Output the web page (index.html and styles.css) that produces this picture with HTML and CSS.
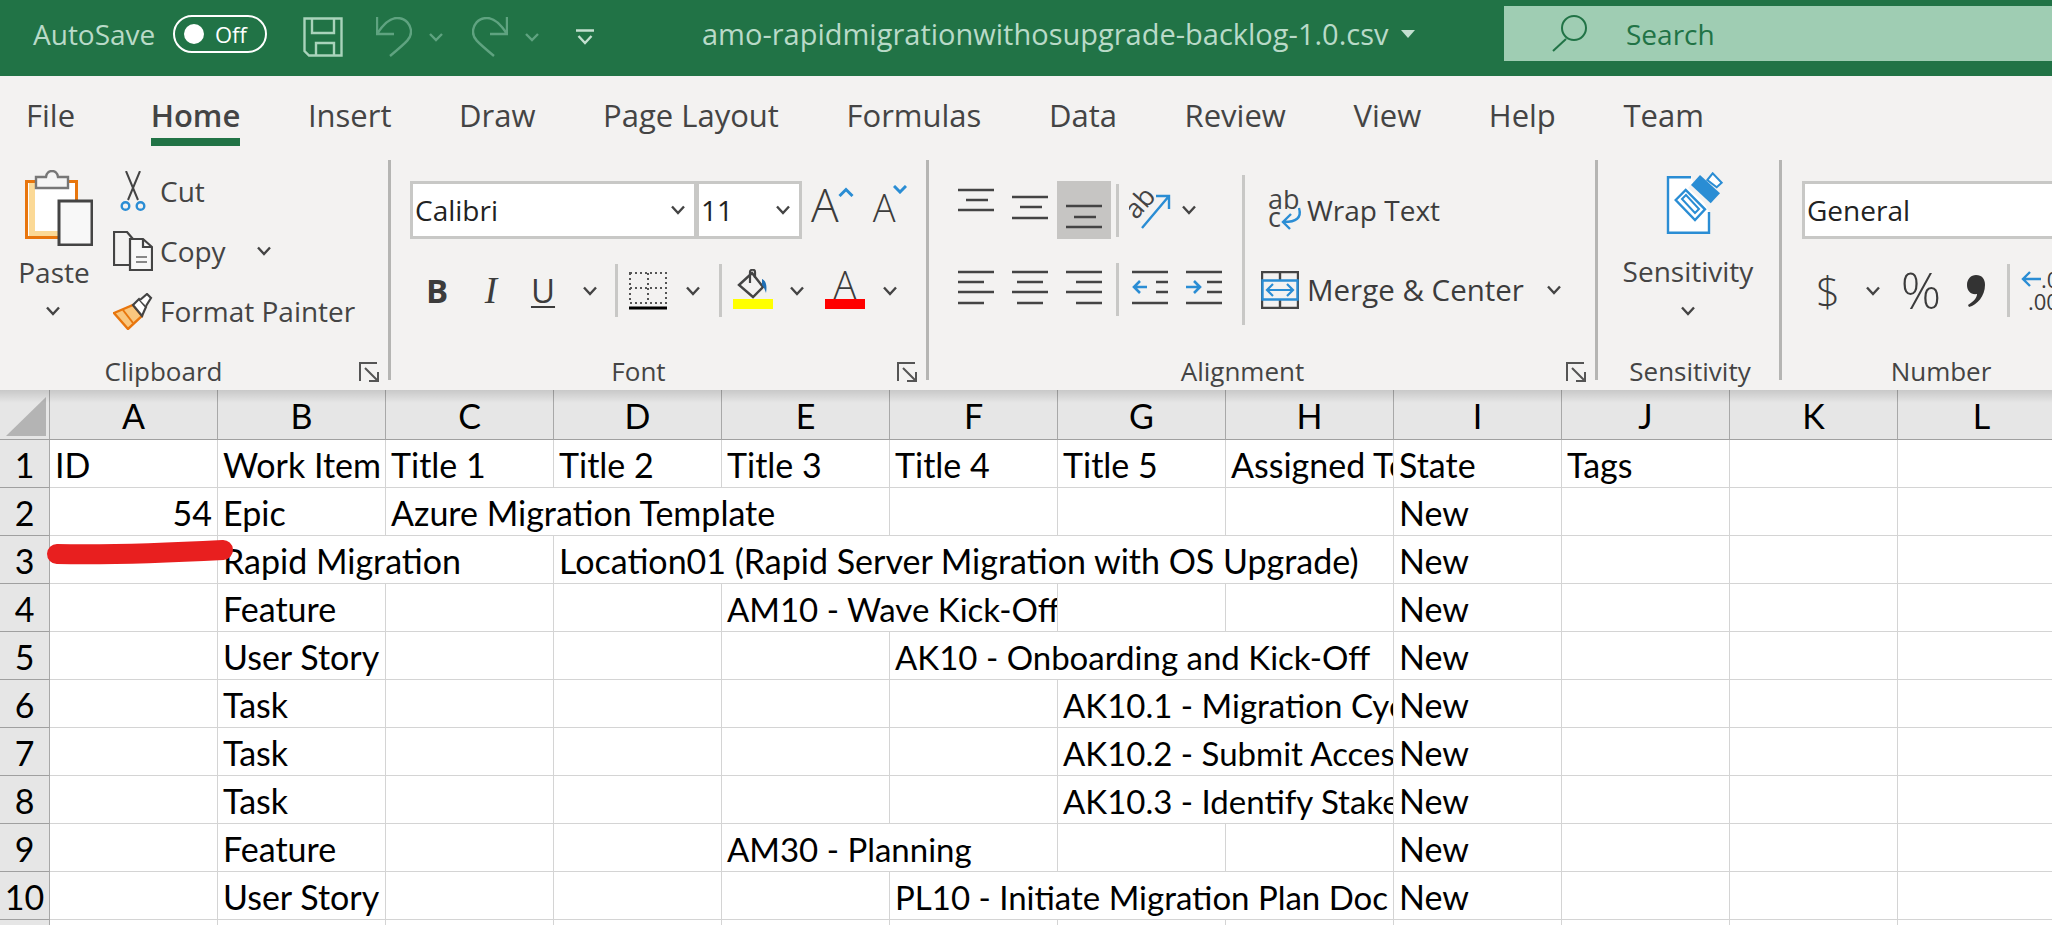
FILE: index.html
```html
<!DOCTYPE html>
<html>
<head>
<meta charset="utf-8">
<title>amo-rapidmigrationwithosupgrade-backlog-1.0.csv - Excel</title>
<link rel="stylesheet" href="styles.css">
</head>
<body>

<svg class="defs" aria-hidden="true">
  <symbol id="chev" viewBox="0 0 14 10"><path d="M1 1.5l6 6.5 6-6.5" fill="none" stroke="#444" stroke-width="2.4"/></symbol>
  <symbol id="launch" viewBox="0 0 21 20"><path d="M1 19V1h17M6 6l13 13M19 10v9h-9" fill="none" stroke="#555" stroke-width="2"/></symbol>
</svg>

<header class="titlebar">
  <span class="autosave">AutoSave</span>
  <span class="toggle"><i class="knob"></i>Off</span>
  <svg class="qa qa-save" width="40" height="40" viewBox="0 0 40 40" fill="none" stroke="#a9d3bb" stroke-width="2.4"><path d="M1.5 1.5h37v37H6l-4.500-4.500zM9 1.500V16h22V1.500M13 38.500V26h18v12.500"/></svg>
  <svg class="qa qa-undo" width="36" height="40" viewBox="0 0 36 40" fill="none" stroke="#5fa380" stroke-width="2.400"><path d="M1 0v17h17M1 17C8 6 14 1 21 1c9 0 14 7 14 14 0 6-3 9-21 24"/></svg>
  <svg class="qa qa-chev" width="14" height="9" viewBox="0 0 14 9" fill="none" stroke="#5fa380" stroke-width="2.400"><path d="M1 1l6 6 6-6"/></svg>
  <svg class="qa qa-redo" width="36" height="40" viewBox="0 0 36 40" fill="none" stroke="#5fa380" stroke-width="2.400"><path d="M35 0v17H18M35 17C28 6 22 1 15 1 6 1 1 8 1 15c0 6 3 9 21 24"/></svg>
  <svg class="qa qa-chev" width="14" height="9" viewBox="0 0 14 9" fill="none" stroke="#5fa380" stroke-width="2.400"><path d="M1 1l6 6 6-6"/></svg>
  <svg class="qa qa-more" width="18" height="16" viewBox="0 0 18 16" fill="none" stroke="#c3e0d0" stroke-width="2.400"><path d="M0 1.500h18M2.500 7l6.500 7 6.500-7"/></svg>
  <span class="filename">amo-rapidmigrationwithosupgrade-backlog-1.0.csv</span>
  <svg class="caret" width="14" height="8" viewBox="0 0 14 8"><path d="M0 0h14l-7 8z" fill="#c3e0d0"/></svg>
  <div class="search">
    <svg width="36" height="37" viewBox="0 0 36 37" fill="none" stroke="#217346" stroke-width="2"><circle cx="22" cy="13" r="12"/><path d="M14 24L1 36"/></svg>
    <span>Search</span>
  </div>
</header>

<nav class="tabs">
  <span>File</span>
  <span class="on">Home</span>
  <span>Insert</span>
  <span>Draw</span>
  <span>Page Layout</span>
  <span>Formulas</span>
  <span>Data</span>
  <span>Review</span>
  <span>View</span>
  <span>Help</span>
  <span>Team</span>
</nav>

<section class="ribbon">

  <div class="group g-clip">
    <div class="body clip-body">
      <div class="paste">
        <svg class="paste-ic" width="68" height="76" viewBox="0 0 68 76">
          <rect x="1.500" y="11.500" width="50" height="56" fill="#fff" stroke="#e8760d" stroke-width="3"/>
          <path d="M4 13h6v48h24v5H4z" fill="#fbd996"/>
          <path d="M11 18V7h10c1-8 11-8 12 0h10v11z" fill="#f5f5f5" stroke="#777" stroke-width="2.400"/>
          <rect x="34" y="31" width="33" height="44" fill="#f8f8f8" stroke="#444" stroke-width="3"/>
        </svg>
        <span class="paste-label">Paste</span>
        <svg class="chev"><use href="#chev"/></svg>
      </div>
      <div class="clip-list">
        <div class="clip-row">
          <span class="clip-ic"><svg width="26" height="40" viewBox="0 0 26 40" fill="none"><path d="M6 0l12 29M20 0L8 29" stroke="#444" stroke-width="2"/><circle cx="5.500" cy="35" r="3.800" stroke="#2a8dd4" stroke-width="2.400"/><circle cx="20.500" cy="35" r="3.800" stroke="#2a8dd4" stroke-width="2.400"/></svg></span>
          <span>Cut</span>
        </div>
        <div class="clip-row">
          <span class="clip-ic"><svg width="40" height="40" viewBox="0 0 40 40" fill="none" stroke="#444" stroke-width="2.200"><path d="M16 34H1V1h13l6 7"/><path d="M17 8h13l9 8v23H17z" fill="#f8f8f8"/><path d="M30 8v8h9"/><path d="M23 26h11M23 31h11" stroke="#888"/></svg></span>
          <span>Copy</span>
          <svg class="chev copy-chev"><use href="#chev"/></svg>
        </div>
        <div class="clip-row">
          <span class="clip-ic"><svg width="40" height="37" viewBox="0 0 40 37"><path d="M1 20l19-8 9 11-14 13z" fill="#f9c77e" stroke="#e8760d" stroke-width="2.400"/><path d="M10 17l10 13" stroke="#e8760d" stroke-width="2"/><path d="M20 12l6-6 7 8-4 9z" fill="#fff" stroke="#444" stroke-width="2.200"/><path d="M27 7l7-6 4 4-5 8" fill="#fff" stroke="#444" stroke-width="2.200"/></svg></span>
          <span>Format Painter</span>
        </div>
      </div>
    </div>
    <div class="label">Clipboard<svg class="launch"><use href="#launch"/></svg></div>
  </div>

  <div class="group g-font">
    <div class="body">
      <div class="font-boxes">
        <div class="box fontname">Calibri<svg class="chev"><use href="#chev"/></svg></div>
        <div class="box fontsize">11<svg class="chev"><use href="#chev"/></svg></div>
        <span class="grow">A<svg width="16" height="10" viewBox="0 0 16 10" fill="none" stroke="#2a8dd4" stroke-width="3"><path d="M1.500 9L8 2.500 14.500 9"/></svg></span>
        <span class="shrink">A<svg width="14" height="9" viewBox="0 0 14 9" fill="none" stroke="#2a8dd4" stroke-width="3"><path d="M1 1l6 6 6-6"/></svg></span>
      </div>
      <div class="font-tools">
        <span class="tool t-b">B</span>
        <span class="tool t-i">I</span>
        <span class="tool t-u">U</span>
        <span class="tool"><svg class="chev"><use href="#chev"/></svg></span>
        <span class="tool"><i class="vsep"></i></span>
        <span class="tool"><svg width="38" height="38" viewBox="0 0 38 38" fill="none"><path d="M1 1h36v30H1zM19 1v30M1 16h36" stroke="#555" stroke-width="2" stroke-dasharray="2 3"/><path d="M0 36h38" stroke="#000" stroke-width="3"/></svg></span>
        <span class="tool"><svg class="chev"><use href="#chev"/></svg></span>
        <span class="tool"><i class="vsep"></i></span>
        <span class="tool colour">
          <svg width="32" height="30" viewBox="0 0 32 30" fill="none"><path d="M2 16L15 4l11 14-10 10z" stroke="#444" stroke-width="2.400"/><path d="M13 14V3c0-3 5-3 5 0v6" stroke="#444" stroke-width="2.200"/><path d="M25 10c5 2 5 9 4 14-1-3-2-6-4-8z" fill="#1f6fb5"/></svg>
          <i class="bar yellow"></i>
        </span>
        <span class="tool"><svg class="chev"><use href="#chev"/></svg></span>
        <span class="tool colour">
          <span class="t-a">A</span>
          <i class="bar red"></i>
        </span>
        <span class="tool"><svg class="chev"><use href="#chev"/></svg></span>
      </div>
    </div>
    <div class="label">Font<svg class="launch"><use href="#launch"/></svg></div>
  </div>

  <div class="group g-align">
    <div class="body align-body">
      <div class="align-grid">
        <span class="tool"><svg width="36" height="58" viewBox="0 0 36 58"><path class="ln" d="M0 9h36M8 19h22M0 29h36"/></svg></span>
        <span class="tool"><svg width="36" height="58" viewBox="0 0 36 58"><path class="ln" d="M0 16h36M8 26h22M0 37h36"/></svg></span>
        <span class="tool pressed"><svg width="36" height="58" viewBox="0 0 36 58"><path class="ln" d="M0 25h36M8 36h22M0 46h36"/></svg></span>
        <span class="tool"><i class="vsep"></i></span>
        <span class="tool"><svg width="42" height="38" viewBox="0 0 42 38" fill="none"><text x="0" y="22" class="orient" transform="rotate(-48 12 18)">ab</text><path d="M13 37L40 5M27 5h13v13" stroke="#2a8dd4" stroke-width="2.400"/></svg></span>
        <span class="tool orient-chev"><svg class="chev"><use href="#chev"/></svg></span>

        <span class="tool"><svg width="36" height="53" viewBox="0 0 36 53"><path class="ln" d="M0 9h36M0 19h26M0 29h36M0 40h26"/></svg></span>
        <span class="tool"><svg width="36" height="53" viewBox="0 0 36 53"><path class="ln" d="M0 9h36M5 19h26M0 29h36M5 40h26"/></svg></span>
        <span class="tool"><svg width="36" height="53" viewBox="0 0 36 53"><path class="ln" d="M0 9h36M10 19h26M0 29h36M10 40h26"/></svg></span>
        <span class="tool"><i class="vsep"></i></span>
        <span class="tool"><svg width="36" height="53" viewBox="0 0 36 53"><path class="ln" d="M0 9h36M24 19h12M24 29h12M0 40h36"/><path d="M15 24H2M8 18l-6 6 6 6" fill="none" stroke="#2a8dd4" stroke-width="2.600"/></svg></span>
        <span class="tool"><svg width="36" height="53" viewBox="0 0 36 53"><path class="ln" d="M0 9h36M21 19h15M21 29h15M0 40h36"/><path d="M0 24h13M8 18l6 6-6 6" fill="none" stroke="#2a8dd4" stroke-width="2.600"/></svg></span>
      </div>
      <i class="vsep tall"></i>
      <div class="wrap-list">
        <div class="wrap-row">
          <svg width="36" height="40" viewBox="0 0 36 40" fill="none"><text x="1" y="19" class="wrap-ab">ab</text><text x="1" y="37" class="wrap-ab">c</text><path d="M32 18c3 10-3 14-15 14M24 24l-8 8 7 7" stroke="#2a8dd4" stroke-width="2.400"/></svg>
          <span>Wrap Text</span>
        </div>
        <div class="wrap-row merge">
          <svg width="38" height="38" viewBox="0 0 38 38" fill="none"><path d="M1 1h36v36H1zM19 1v8M19 29v8" stroke="#444" stroke-width="2.400"/><path d="M1.500 9.500h35v19h-35z" fill="#f3f2f1" stroke="#2a8dd4" stroke-width="2.400"/><path d="M6 19h26M12 13l-6 6 6 6M26 13l6 6-6 6" stroke="#2a8dd4" stroke-width="2.200"/></svg>
          <span>Merge &amp; Center</span>
          <svg class="chev merge-chev"><use href="#chev"/></svg>
        </div>
      </div>
    </div>
    <div class="label">Alignment<svg class="launch"><use href="#launch"/></svg></div>
  </div>

  <div class="group g-sens">
    <div class="body sens-body">
      <svg class="sens-ic" width="60" height="64" viewBox="0 0 60 64">
        <path d="M25 5.300H2v55.400h41V40" fill="#fff" stroke="#2a8dd4" stroke-width="2.400"/>
        <path d="M9.700 28l10-10 19.300 19.300-10 10.700z" fill="#fff" stroke="#2a8dd4" stroke-width="2.400"/>
        <path d="M16 27l4-4 13 14-4 4z" fill="none" stroke="#2a8dd4" stroke-width="2"/>
        <path d="M22 16l9-10 23 23-9 8z" fill="#f3f2f1"/>
        <path d="M25 13l9-10 20 18.300-9.300 10z" fill="#2a8dd4"/>
        <path d="M41.300 8l5.400-6.700 9 9.400-5 4.600z" fill="#fff" stroke="#2a8dd4" stroke-width="2"/>
      </svg>
      <span class="sens-label">Sensitivity</span>
      <svg class="chev"><use href="#chev"/></svg>
    </div>
    <div class="label">Sensitivity</div>
  </div>

  <div class="group g-num">
    <div class="body">
      <div class="box numfmt">General</div>
      <div class="num-tools">
        <span class="tool t-dollar">$</span>
        <span class="tool"><svg class="chev"><use href="#chev"/></svg></span>
        <span class="tool t-pct">%</span>
        <span class="tool"><svg width="20" height="34" viewBox="0 0 20 34"><path d="M10 1c6 0 9 4 9 10 0 11-8 20-16 22l-1-2c5-3 9-7 9-11-6 1-10-3-10-9S5 1 10 1z" fill="#333"/></svg></span>
        <span class="tool"><i class="vsep"></i></span>
        <span class="decimal">
          <span class="dec-top"><svg width="20" height="16" viewBox="0 0 20 16" fill="none" stroke="#2a8dd4" stroke-width="2.400"><path d="M20 8H2M9 1L2 8l7 7"/></svg>.0</span>
          <span class="dec-bot">.00</span>
        </span>
      </div>
    </div>
    <div class="label">Number</div>
  </div>

</section>

<main class="sheet">
  <div class="hd corner"><i class="tri"></i></div>
  <div class="hd">A</div><div class="hd">B</div><div class="hd">C</div><div class="hd">D</div><div class="hd">E</div><div class="hd">F</div><div class="hd">G</div><div class="hd">H</div><div class="hd">I</div><div class="hd">J</div><div class="hd">K</div><div class="hd">L</div>

  <div class="rh">1</div>
  <div class="c">ID</div><div class="c">Work Item</div><div class="c">Title 1</div><div class="c">Title 2</div><div class="c">Title 3</div><div class="c">Title 4</div><div class="c">Title 5</div><div class="c">Assigned To</div><div class="c">State</div><div class="c">Tags</div><div class="c"></div><div class="c"></div>

  <div class="rh">2</div>
  <div class="c num">54</div><div class="c">Epic</div><div class="c s3">Azure Migration Template</div><div class="c"></div><div class="c"></div><div class="c"></div><div class="c">New</div><div class="c"></div><div class="c"></div><div class="c"></div>

  <div class="rh">3</div>
  <div class="c"></div><div class="c s2">Rapid Migration</div><div class="c s5">Location01 (Rapid Server Migration with OS Upgrade)</div><div class="c">New</div><div class="c"></div><div class="c"></div><div class="c"></div>

  <div class="rh">4</div>
  <div class="c"></div><div class="c">Feature</div><div class="c"></div><div class="c"></div><div class="c s2 code">AM10 - Wave Kick-Off</div><div class="c"></div><div class="c"></div><div class="c">New</div><div class="c"></div><div class="c"></div><div class="c"></div>

  <div class="rh">5</div>
  <div class="c"></div><div class="c">User Story</div><div class="c"></div><div class="c"></div><div class="c"></div><div class="c s3 code">AK10 - Onboarding and Kick-Off</div><div class="c">New</div><div class="c"></div><div class="c"></div><div class="c"></div>

  <div class="rh">6</div>
  <div class="c"></div><div class="c">Task</div><div class="c"></div><div class="c"></div><div class="c"></div><div class="c"></div><div class="c s2 code">AK10.1 - Migration Cyc</div><div class="c">New</div><div class="c"></div><div class="c"></div><div class="c"></div>

  <div class="rh">7</div>
  <div class="c"></div><div class="c">Task</div><div class="c"></div><div class="c"></div><div class="c"></div><div class="c"></div><div class="c s2 code">AK10.2 - Submit Acces</div><div class="c">New</div><div class="c"></div><div class="c"></div><div class="c"></div>

  <div class="rh">8</div>
  <div class="c"></div><div class="c">Task</div><div class="c"></div><div class="c"></div><div class="c"></div><div class="c"></div><div class="c s2 code">AK10.3 - Identify Stake</div><div class="c">New</div><div class="c"></div><div class="c"></div><div class="c"></div>

  <div class="rh">9</div>
  <div class="c"></div><div class="c">Feature</div><div class="c"></div><div class="c"></div><div class="c s2 code">AM30 - Planning</div><div class="c"></div><div class="c"></div><div class="c">New</div><div class="c"></div><div class="c"></div><div class="c"></div>

  <div class="rh">10</div>
  <div class="c"></div><div class="c">User Story</div><div class="c"></div><div class="c"></div><div class="c"></div><div class="c s3 code">PL10 - Initiate Migration Plan Doc</div><div class="c">New</div><div class="c"></div><div class="c"></div><div class="c"></div>

  <div class="rh"></div>
  <div class="c"></div><div class="c"></div><div class="c"></div><div class="c"></div><div class="c"></div><div class="c"></div><div class="c"></div><div class="c"></div><div class="c"></div><div class="c"></div><div class="c"></div><div class="c"></div>

  <svg class="scribble" width="200" height="36" viewBox="0 0 200 36"><path d="M20 19C70 20 130 18 186 15" fill="none" stroke="#e81f1f" stroke-width="20" stroke-linecap="round"/></svg>
</main>

</body>
</html>
```

FILE: styles.css
```css
html, body {
	margin: 0;
	height: 100%;
	overflow: hidden;
	background: #fff;
}
body {
	font-family: "Open Sans", "Noto Sans", sans-serif;
	color: #444;
}
.defs {
	display: none;
}
.chev {
	width: 14px;
	height: 10px;
	flex: none;
}
i {
	display: block;
}

/* title bar */
.titlebar {
	display: flex;
	align-items: center;
	box-sizing: border-box;
	height: 76px;
	padding: 0 0 9px 33px;
	background: #217346;
	color: #b9dac8;
	font-size: 28px;
	white-space: nowrap;
}
.autosave {
	width: 124px;
}
.toggle {
	display: flex;
	align-items: center;
	box-sizing: border-box;
	width: 94px;
	height: 38px;
	margin-left: 16px;
	padding-left: 9px;
	border: 2px solid #fff;
	border-radius: 19px;
	color: #fff;
	font-size: 22px;
}
.knob {
	width: 20px;
	height: 20px;
	margin-right: 11px;
	border-radius: 50%;
	background: #fff;
}
.qa {
	margin-top: 7px;
}
.qa-save {
	margin-left: 36px;
}
.qa-undo {
	margin-left: 33px;
}
.qa-chev {
	margin-left: 17px;
}
.qa-redo {
	margin-left: 29px;
}
.qa-more {
	margin-left: 37px;
}
.filename {
	width: 688px;
	margin-left: 108px;
	font-size: 29px;
}
.caret {
	margin-left: 11px;
}
.search {
	display: flex;
	align-items: center;
	box-sizing: border-box;
	width: 548px;
	height: 55px;
	margin-left: auto;
	padding-left: 48px;
	background: #9fcdb3;
	color: #217346;
}
.search span {
	margin-left: 38px;
}

/* tabs */
.tabs {
	display: flex;
	gap: 67.6px;
	height: 74px;
	padding-left: 26px;
	background: #f3f2f1;
	font-size: 31px;
	line-height: 78px;
}
.tabs .on {
	position: relative;
	margin-left: 8px;
	font-weight: 600;
}
.tabs .on::after {
	content: "";
	position: absolute;
	left: 0;
	right: 0;
	top: 62px;
	height: 8px;
	background: #217346;
}

/* ribbon */
.ribbon {
	display: flex;
	height: 240px;
	background: #f3f2f1;
	font-size: 28px;
	white-space: nowrap;
	overflow: hidden;
}
.group {
	position: relative;
	display: flex;
	flex-direction: column;
	box-sizing: border-box;
	flex: none;
}
.group::after {
	content: "";
	position: absolute;
	right: 0;
	top: 10px;
	bottom: 10px;
	width: 3px;
	background: #b5b5b3;
}
.body {
	height: 202px;
}
.label {
	position: relative;
	height: 38px;
	line-height: 38px;
	text-align: center;
	font-size: 26px;
}
.launch {
	position: absolute;
	right: 11px;
	top: 10px;
	width: 21px;
	height: 20px;
}
.tool {
	display: flex;
	align-items: center;
	justify-content: center;
	color: #3c3c3c;
}
.vsep {
	width: 3px;
	height: 53px;
	background: #c8c8c6;
}

/* clipboard */
.g-clip {
	width: 391px;
}
.clip-body {
	display: flex;
}
.paste {
	display: flex;
	flex-direction: column;
	align-items: center;
	width: 113px;
	padding-top: 20px;
	padding-left: 2px;
	padding-right: 7px;
	box-sizing: border-box;
}
.paste-ic {
	margin-left: 10px;
}
.paste-label {
	height: 52px;
	line-height: 52px;
}
.paste .chev {
	margin-top: 8px;
	margin-left: -2px;
}
.clip-list {
	padding-top: 11px;
}
.clip-row {
	display: flex;
	align-items: center;
	height: 60px;
}
.clip-ic {
	display: flex;
	justify-content: center;
	width: 40px;
	margin-right: 7px;
}
.copy-chev {
	margin-left: 31px;
}
.g-clip .label {
	padding-right: 64px;
}

/* font */
.g-font {
	width: 538px;
	padding-left: 19px;
}
.g-font .label {
	padding-right: 62px;
}
.box {
	box-sizing: border-box;
	height: 58px;
	border: 3px solid #c8c8c6;
	background: #fff;
	color: #222;
	font-size: 28px;
	line-height: 50px;
	padding-left: 2px;
	display: flex;
	align-items: center;
	justify-content: space-between;
	padding-right: 9px;
}
.font-boxes {
	display: flex;
	margin-top: 31px;
}
.fontname {
	width: 287px;
}
.fontsize {
	width: 106px;
	margin-left: -1px;
}
.grow, .shrink {
	display: flex;
	font-weight: 300;
	color: #3c3c3c;
	line-height: 1;
}
.grow {
	margin-left: 9px;
	font-size: 46px;
}
.shrink {
	margin-left: 19px;
	font-size: 38px;
	padding-top: 7px;
}
.grow svg {
	margin-top: 6px;
	margin-left: -1px;
}
.shrink svg {
	margin-top: -3px;
	margin-left: -2px;
}
.font-tools {
	display: grid;
	grid-template-columns: 54px 54px 50px 44px 8px 56px 34px 20px 46px 42px 54px 36px;
	grid-template-rows: 53px;
	margin-top: 25px;
}
.t-b {
	font-weight: 700;
	font-size: 33px;
}
.t-i {
	font-family: "Liberation Serif", serif;
	font-style: italic;
	font-size: 37px;
}
.t-u {
	font-size: 33px;
	text-decoration: underline;
	text-underline-offset: 3px;
	text-decoration-thickness: 2px;
}
.colour {
	flex-direction: column;
	justify-content: flex-start;
	padding-top: 5px;
}
.t-a {
	font-weight: 300;
	font-size: 38px;
	line-height: 30px;
}
.bar {
	width: 40px;
	height: 10px;
}
.yellow {
	background: #ff0;
}
.red {
	background: #f00;
}
.colour svg {
	height: 30px;
}

/* alignment */
.g-align {
	width: 669px;
	padding-left: 20px;
}
.g-align .label {
	padding-right: 62px;
}
.align-body {
	display: flex;
}
.align-grid {
	display: grid;
	grid-template-columns: 54px 54px 54px 12px 54px 54px;
	grid-template-rows: 58px 53px;
	row-gap: 24px;
	margin-top: 31px;
	width: 282px;
}
.ln {
	stroke: #444;
	stroke-width: 2.600;
	fill: none;
}
.pressed {
	background: #c6c5c3;
}
.orient {
	font-size: 27px;
	fill: #444;
	stroke: none;
}
.orient-chev {
	justify-content: flex-start;
	padding-left: 5px;
}
.tall {
	height: 150px;
	margin: 25px 0 0 11px;
}
.wrap-list {
	margin-top: 31px;
	margin-left: 16px;
	color: #3c3c3c;
}
.wrap-row {
	display: flex;
	align-items: center;
	gap: 4px;
	height: 58px;
	margin-left: 6px;
}
.wrap-ab {
	font-size: 27px;
	fill: #444;
	stroke: none;
}
.merge {
	height: 53px;
	margin-top: 24px;
	margin-left: 0;
	gap: 8px;
	font-size: 29.5px;
}
.merge-chev {
	margin-left: 15px;
}

/* sensitivity */
.g-sens {
	width: 184px;
}
.sens-body {
	display: flex;
	flex-direction: column;
	align-items: center;
	padding-top: 22px;
	box-sizing: border-box;
	padding-right: 4px;
}
.sens-ic {
	margin-left: 16px;
}
.sens-label {
	height: 52px;
	line-height: 52px;
	margin-top: 9px;
}
.sens-body .chev {
	margin-top: 9px;
}

/* number */
.g-num {
	flex: 1;
	padding-left: 20px;
	overflow: hidden;
}
.g-num::after {
	display: none;
}
.g-num .label {
	margin-left: 28px;
}
.numfmt {
	width: 300px;
	margin-top: 31px;
}
.num-tools {
	display: grid;
	grid-template-columns: 52px 38px 58px 52px 12px 60px;
	grid-template-rows: 53px;
	margin-top: 25px;
}
.t-dollar {
	font-size: 42px;
	font-weight: 300;
	line-height: 53px;
}
.t-pct {
	font-size: 50px;
	font-weight: 300;
	line-height: 53px;
}
.decimal {
	display: flex;
	flex-direction: column;
	font-size: 22px;
	line-height: 22px;
	padding: 4px 0 0 7px;
	color: #3c3c3c;
}
.dec-top {
	display: flex;
	align-items: center;
}
.dec-bot {
	padding-left: 7px;
}

/* sheet */
.sheet {
	position: relative;
	display: grid;
	grid-template-columns: 50px repeat(12, 168px);
	grid-template-rows: 50px;
	grid-auto-rows: 48px;
	font-family: Lato, "Noto Sans", sans-serif;
	font-size: 34px;
	color: #000;
	white-space: nowrap;
}
.sheet::before {
	content: "";
	position: absolute;
	left: 0;
	right: 0;
	top: 0;
	height: 13px;
	background: linear-gradient(rgba(0, 0, 0, .13), rgba(0, 0, 0, 0));
}
.hd, .rh {
	box-sizing: border-box;
	background: #e6e6e6;
	text-align: center;
	border-right: 1px solid #a8a8a8;
	border-bottom: 1px solid #a0a0a0;
}
.hd {
	line-height: 52px;
}
.rh {
	line-height: 50px;
}
.corner {
	padding: 7px 0 0 6px;
}
.tri {
	width: 0;
	height: 0;
	border-left: 40px solid transparent;
	border-bottom: 39px solid #b4b4b4;
}
.c {
	box-sizing: border-box;
	padding: 0 5px;
	line-height: 50px;
	overflow: hidden;
	border-right: 1px solid #d4d4d4;
	border-bottom: 1px solid #d4d4d4;
}
.code {
	font-size: 33px;
}
.num {
	text-align: right;
}
.s2 {
	grid-column: span 2;
}
.s3 {
	grid-column: span 3;
}
.s5 {
	grid-column: span 5;
}
.scribble {
	position: absolute;
	left: 37px;
	top: 145px;
}
```
